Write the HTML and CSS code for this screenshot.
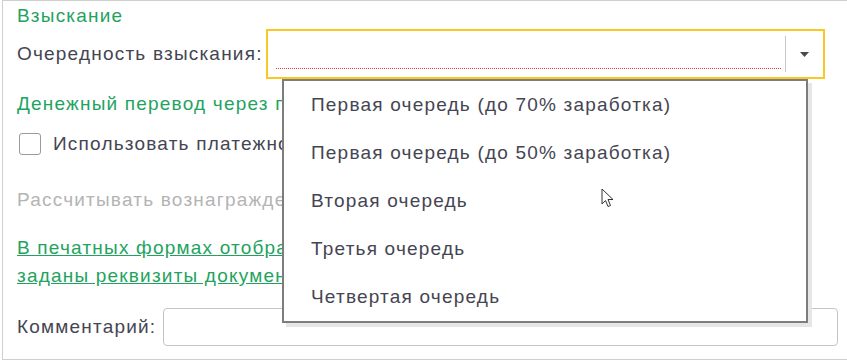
FILE: index.html
```html
<!DOCTYPE html>
<html lang="ru">
<head>
    <meta charset="UTF-8">
    <title>Взыскание</title>
    <link rel="stylesheet" href="styles.css">
</head>
<body>
    <div class="frame">
        <div class="group-title">Взыскание</div>

        <div class="row combo-row">
            <label class="label">Очередность взыскания:</label>
            <div class="combo">
                <div class="combo-field"></div>
                <div class="combo-sep"></div>
                <div class="combo-btn">
                    <svg width="9" height="5" viewBox="0 0 9 5"><path d="M0 0H9L4.5 5Z" fill="#4a4a4a"/></svg>
                </div>

                <ul class="dropdown">
                    <li>Первая очередь (до 70% заработка)</li>
                    <li>Первая очередь (до 50% заработка)</li>
                    <li>Вторая очередь</li>
                    <li>Третья очередь</li>
                    <li>Четвертая очередь</li>
                </ul>
            </div>
        </div>

        <div class="group-title second">Денежный перевод через платежного агента</div>

        <div class="row check-row">
            <span class="checkbox"></span>
            <span class="check-text">Использовать платежного агента</span>
        </div>

        <div class="disabled-text">Рассчитывать вознаграждение платежного агента</div>

        <div class="note">
            <a href="#">В печатных формах отображаются данные агента, если<br>заданы реквизиты документа перевода</a>
        </div>

        <div class="row comment-row">
            <label class="label comment-label">Комментарий:</label>
            <div class="input"></div>
        </div>

        <!-- курсор мыши -->
        <svg class="cursor" width="13" height="20" viewBox="0 0 13 20">
            <path d="M1 1V16L4.5 12.5L7 18.5L9.5 17.5L7 11.5H12Z" fill="#fff" stroke="#333" stroke-width="1" stroke-linejoin="round"/>
        </svg>
    </div>
</body>
</html>
```

FILE: styles.css
```css
body {
    margin: 0;
    background: #fff;
    font-family: Arial, "Liberation Sans", sans-serif;
    font-size: 19px;
    letter-spacing: 1.2px;
    color: #454552;
}

.frame {
    position: relative;
    margin-left: 2px;
    height: 360px;
    box-sizing: border-box;
    border: 1px solid #cfcfcf;
    border-right: none;
    padding: 0 0 0 14px;
}

.group-title {
    color: #1fa35f;
    height: 24px;
    line-height: 24px;
    margin-top: 3px;
    white-space: nowrap;
}

.group-title.second {
    margin-top: 13px;
}

.row {
    display: flex;
    align-items: center;
}

.label {
    white-space: nowrap;
}

.combo-row {
    height: 50px;
    margin-top: 1px;
}

.combo-row .label {
    width: 249px;
}

.combo {
    position: relative;
    width: 559px;
    height: 50px;
    box-sizing: border-box;
    border: 2px solid #f9c823;
    display: flex;
    align-items: center;
}

.combo-field {
    flex: 1;
    align-self: stretch;
    margin: 0 3px 0 8px;
    height: 38px;
    background: repeating-linear-gradient(90deg, #ee3b3b 0 1px, transparent 1px 2px) bottom / 100% 1px no-repeat;
}

.combo-sep {
    width: 1px;
    height: 36px;
    background: #c8c8c8;
}

.combo-btn {
    width: 37px;
    display: flex;
    justify-content: center;
    align-items: center;
}

.dropdown {
    position: absolute;
    left: 14px;
    top: 48px;
    width: 526px;
    height: 244px;
    box-sizing: border-box;
    margin: 0;
    padding: 0;
    list-style: none;
    background: #fff;
    border: 2px solid #7d7d7d;
    box-shadow: 4px 4px 0 #e6e6e6;
    z-index: 2;
}

.dropdown li {
    height: 48px;
    line-height: 48px;
    padding-left: 27px;
    white-space: nowrap;
}

.check-row {
    height: 30px;
    margin-top: 13px;
}

.checkbox {
    width: 22px;
    height: 22px;
    margin-left: 2px;
    border: 1px solid #9a9a9a;
    border-radius: 3px;
    box-sizing: border-box;
    background: #fff;
}

.check-text {
    margin-left: 12px;
    white-space: nowrap;
}

.disabled-text {
    color: #b4b4b4;
    height: 30px;
    line-height: 30px;
    margin-top: 26px;
    white-space: nowrap;
}

.note {
    margin-top: 19px;
    line-height: 28px;
    white-space: nowrap;
}

.note a {
    color: #1fa35f;
    text-decoration: underline;
}

.comment-row {
    margin-top: 18px;
    height: 38px;
}

.comment-label {
    width: 146px;
}

.input {
    width: 675px;
    height: 38px;
    box-sizing: border-box;
    border: 1px solid #c4c4c4;
    border-radius: 4px;
    background: #fff;
}

.cursor {
    position: absolute;
    left: 598px;
    top: 187px;
    z-index: 3;
}
```
